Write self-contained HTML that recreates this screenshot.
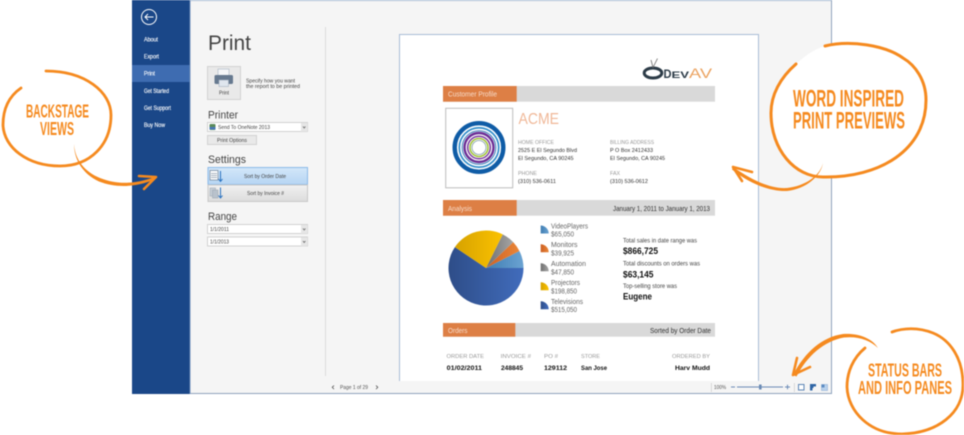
<!DOCTYPE html>
<html><head><meta charset="utf-8"><style>
html,body{margin:0;padding:0;background:#fff;width:964px;height:435px;overflow:hidden}
svg{display:block;filter:blur(.4px)}
text{font-family:"Liberation Sans",sans-serif;white-space:pre}
.n{fill:#fff;font-size:6px;stroke:#fff;stroke-width:.12px}
.s{fill:#444;font-size:5.3px}
.h{fill:#444;font-size:11px}
.l{fill:#999;font-size:5.6px}
.d{fill:#333;font-size:5.8px}
.b{fill:#f7dccb;font-size:7.3px}
.r{fill:#333;font-size:7.2px}
.g{fill:#666;font-size:7px}
.t{fill:#444;font-size:6px}
.v{fill:#111;font-size:9.2px;font-weight:bold}
.o{fill:#111;font-size:6.6px;font-weight:bold}
.c{fill:#f58a1f;font-weight:bold}
.st{fill:#555;font-size:5px}
.pen{fill:none;stroke:#f58a1f;stroke-linecap:round;stroke-linejoin:round}
.fil{fill:#f58a1f}
</style></head><body>
<svg width="964" height="435" viewBox="0 0 964 435" xmlns="http://www.w3.org/2000/svg">
<defs>
<linearGradient id="gV" x1="0" x2="1" y1="0" y2="0"><stop offset="0" stop-color="#3f7db2"/><stop offset="1" stop-color="#6ba3d2"/></linearGradient>
<linearGradient id="gM" x1="0" x2="1" y1="0" y2="0"><stop offset="0" stop-color="#cc5f22"/><stop offset="1" stop-color="#ea8638"/></linearGradient>
<linearGradient id="gA" x1="0" x2="1" y1="0" y2="0"><stop offset="0" stop-color="#6f6f6f"/><stop offset="1" stop-color="#a5a5a5"/></linearGradient>
<linearGradient id="gP" x1="0" x2="1" y1="0" y2="0"><stop offset="0" stop-color="#d6a200"/><stop offset="1" stop-color="#fbc200"/></linearGradient>
<linearGradient id="gT" x1="0" x2="1" y1="0" y2="0"><stop offset="0" stop-color="#2e4d88"/><stop offset="1" stop-color="#416cbc"/></linearGradient>
<linearGradient id="gB" x1="0" x2="0" y1="0" y2="1"><stop offset="0" stop-color="#d3e7f9"/><stop offset="1" stop-color="#b6d5f3"/></linearGradient>
<linearGradient id="gG" x1="0" x2="0" y1="0" y2="1"><stop offset="0" stop-color="#f1f1f1"/><stop offset="1" stop-color="#dcdcdc"/></linearGradient>
</defs>

<!-- window -->
<rect x="132" y="0" width="700" height="394" fill="#f5f5f5"/>
<rect x="132" y="0" width="700" height="1" fill="#a9bdd6"/>
<rect x="132" y="393" width="700" height="1" fill="#8fa3bd"/>
<rect x="831" y="0" width="1" height="394" fill="#8fa3bd"/>
<rect x="132" y="0" width="57.5" height="394" fill="#1a4788"/>
<rect x="189.5" y="0" width="1" height="394" fill="#6f8fbb"/>

<!-- sidebar -->
<circle cx="149" cy="17" r="7.5" fill="none" stroke="#fff" stroke-width="1"/>
<path d="M153.5 17H145M148 14L145 17L148 20" fill="none" stroke="#fff" stroke-width="1"/>
<rect x="132" y="65" width="57.5" height="17" fill="#3e6cb1"/>
<text class="n" x="144" y="41.5" textLength="14" lengthAdjust="spacingAndGlyphs">About</text>
<text class="n" x="144" y="58.5" textLength="15" lengthAdjust="spacingAndGlyphs">Export</text>
<text class="n" x="144" y="75.5" textLength="11" lengthAdjust="spacingAndGlyphs">Print</text>
<text class="n" x="144" y="93" textLength="25" lengthAdjust="spacingAndGlyphs">Get Started</text>
<text class="n" x="144" y="110" textLength="27" lengthAdjust="spacingAndGlyphs">Get Support</text>
<text class="n" x="144" y="127" textLength="21" lengthAdjust="spacingAndGlyphs">Buy Now</text>

<!-- options column -->
<text x="208" y="50" font-size="21.5" fill="#444" textLength="43" lengthAdjust="spacingAndGlyphs">Print</text>
<rect x="207.5" y="66.5" width="33" height="33" fill="#e9e9e9" stroke="#d2d2d2"/>
<rect x="218" y="69" width="11" height="7" fill="#f4f6f8" stroke="#9aa8b8" stroke-width=".5"/>
<rect x="214.5" y="75" width="18.5" height="9" rx="1.5" fill="#66798f"/>
<rect x="219" y="80" width="9.5" height="6.5" fill="#dfe6ee" stroke="#9aa8b8" stroke-width=".5"/>
<text class="s" x="219" y="94.5" textLength="10" lengthAdjust="spacingAndGlyphs">Print</text>
<text class="s" x="246" y="82.5" textLength="49" lengthAdjust="spacingAndGlyphs">Specify how you want</text>
<text class="s" x="246" y="88" textLength="54" lengthAdjust="spacingAndGlyphs">the report to be printed</text>

<text class="h" x="208" y="118.5" textLength="30" lengthAdjust="spacingAndGlyphs">Printer</text>
<rect x="207.5" y="122.5" width="100" height="9" fill="#fff" stroke="#d2d2d2"/>
<rect x="301" y="123" width="6.5" height="8.5" fill="#e6e6e6"/>
<path d="M303 126.5l1.2 1.5 1.2-1.5" fill="none" stroke="#666" stroke-width=".8"/>
<rect x="209.5" y="124" width="6" height="6" rx="1" fill="#5a8a5a"/>
<rect x="209.5" y="127" width="6" height="2.5" fill="#4a78b8"/>
<text class="s" x="218" y="129" textLength="52" lengthAdjust="spacingAndGlyphs">Send To OneNote 2013</text>
<rect x="207.5" y="135.5" width="49" height="9" fill="#e9e9e9" stroke="#d2d2d2"/>
<text class="s" x="217" y="142" textLength="30" lengthAdjust="spacingAndGlyphs">Print Options</text>

<text class="h" x="208" y="163" textLength="38" lengthAdjust="spacingAndGlyphs">Settings</text>
<rect x="208" y="167.5" width="99.5" height="17" fill="url(#gB)" stroke="#8cbae8"/>
<rect x="208" y="185" width="99.5" height="16.5" fill="url(#gG)" stroke="#c8c8c8"/>
<rect x="210" y="170.5" width="8" height="9.5" fill="#fff" stroke="#6d7f94" stroke-width=".7"/>
<path d="M211 173.5h6M211 175.5h6M211 177.5h6" stroke="#8a99aa" stroke-width=".7"/>
<path d="M220.5 171v10M218.5 179l2 2.5 2-2.5" fill="none" stroke="#2a72c0" stroke-width="1"/>
<text class="s" x="244" y="178" textLength="42" lengthAdjust="spacingAndGlyphs">Sort by Order Date</text>
<rect x="210" y="188" width="5.5" height="8" fill="#c7ced6" stroke="#98a4b0" stroke-width=".5"/>
<rect x="212.5" y="190" width="5.5" height="8" fill="#b9c2cc" stroke="#98a4b0" stroke-width=".5"/>
<path d="M220.5 187.5v10M218.5 195.5l2 2.5 2-2.5" fill="none" stroke="#2a72c0" stroke-width="1"/>
<text class="s" x="247" y="195" textLength="37" lengthAdjust="spacingAndGlyphs">Sort by Invoice #</text>

<text class="h" x="208" y="220" textLength="29" lengthAdjust="spacingAndGlyphs">Range</text>
<rect x="207.5" y="224.5" width="100" height="9" fill="#fff" stroke="#d2d2d2"/>
<rect x="301" y="225" width="6.5" height="8.5" fill="#e6e6e6"/>
<path d="M303 228.5l1.2 1.5 1.2-1.5" fill="none" stroke="#666" stroke-width=".8"/>
<text class="s" x="210" y="231" textLength="19" lengthAdjust="spacingAndGlyphs">1/1/2011</text>
<rect x="207.5" y="237" width="100" height="9" fill="#fff" stroke="#d2d2d2"/>
<rect x="301" y="237.5" width="6.5" height="8.5" fill="#e6e6e6"/>
<path d="M303 241l1.2 1.5 1.2-1.5" fill="none" stroke="#666" stroke-width=".8"/>
<text class="s" x="210" y="243.5" textLength="19" lengthAdjust="spacingAndGlyphs">1/1/2013</text>
<rect x="325" y="27" width="1" height="349" fill="#dcdcdc"/>

<!-- page -->
<rect x="399" y="34" width="360" height="347" fill="#fff"/>
<rect x="399" y="34" width="360" height="1" fill="#a9bcd6"/>
<rect x="399" y="34" width="1" height="347" fill="#a9bcd6"/>
<rect x="758" y="34" width="1" height="347" fill="#a9bcd6"/>

<!-- devav logo -->
<ellipse cx="653" cy="73" rx="8.8" ry="5" fill="none" stroke="#2c3b47" stroke-width="3"/>
<path d="M651 60L653 67.5L657.5 58.5" fill="none" stroke="#6a6a6a" stroke-width=".8"/>
<text x="663.5" y="78" font-size="12" font-weight="bold" fill="#2c3b47" textLength="8" lengthAdjust="spacingAndGlyphs">D</text>
<text x="671.5" y="78" font-size="9" font-weight="bold" fill="#2c3b47" textLength="17.5" lengthAdjust="spacingAndGlyphs">EV</text>
<text x="689" y="78" font-size="14" fill="#eba25f" textLength="23" lengthAdjust="spacingAndGlyphs">AV</text>

<!-- customer bar -->
<rect x="443" y="86" width="272" height="15.7" fill="#d9d9d9"/>
<rect x="443" y="86" width="73.7" height="15.7" fill="#dd7f45"/>
<text class="b" x="448" y="96.5" textLength="49" lengthAdjust="spacingAndGlyphs">Customer Profile</text>
<rect x="445.7" y="108.3" width="67" height="79.5" fill="#fff" stroke="#bcbcbc"/>
<g fill="none">
<circle cx="479" cy="147.5" r="24.3" stroke="#0f5ca6" stroke-width="4.4"/>
<circle cx="479" cy="147.5" r="19.7" stroke="#2b8ac9" stroke-width="1.6"/>
<circle cx="479" cy="147.5" r="16.8" stroke="#3a7fb8" stroke-width="1"/>
<circle cx="479" cy="147.5" r="14.5" stroke="#6c2f95" stroke-width="2.4"/>
<circle cx="479" cy="147.5" r="11.3" stroke="#7d3ca3" stroke-width="1.5"/>
<circle cx="479" cy="147.5" r="9" stroke="#a2c53c" stroke-width="1.6"/>
<circle cx="479" cy="147.5" r="7" stroke="#7f9aa8" stroke-width=".8"/>
</g>
<text x="518.5" y="124" font-size="15.5" fill="#f0b898" textLength="40.5" lengthAdjust="spacingAndGlyphs">ACME</text>
<text class="l" x="518" y="144" textLength="36" lengthAdjust="spacingAndGlyphs">HOME OFFICE</text>
<text class="d" x="518" y="152.2" textLength="59" lengthAdjust="spacingAndGlyphs">2525 E El Segundo Blvd</text>
<text class="d" x="518" y="159.8" textLength="55.5" lengthAdjust="spacingAndGlyphs">El Segundo, CA 90245</text>
<text class="l" x="518" y="175" textLength="19" lengthAdjust="spacingAndGlyphs">PHONE</text>
<text class="d" x="518" y="183" textLength="38" lengthAdjust="spacingAndGlyphs">(310) 536-0611</text>
<text class="l" x="610" y="144" textLength="44" lengthAdjust="spacingAndGlyphs">BILLING ADDRESS</text>
<text class="d" x="610" y="152.2" textLength="43" lengthAdjust="spacingAndGlyphs">P O Box 2412433</text>
<text class="d" x="610" y="159.8" textLength="55" lengthAdjust="spacingAndGlyphs">El Segundo, CA 90245</text>
<text class="l" x="610" y="175" textLength="10" lengthAdjust="spacingAndGlyphs">FAX</text>
<text class="d" x="610" y="183" textLength="38" lengthAdjust="spacingAndGlyphs">(310) 536-0612</text>

<!-- analysis bar -->
<rect x="443" y="200" width="272" height="15.7" fill="#d9d9d9"/>
<rect x="443" y="200" width="73.7" height="15.7" fill="#dd7f45"/>
<text class="b" x="448" y="211" textLength="24" lengthAdjust="spacingAndGlyphs">Analysis</text>
<text class="r" x="613" y="211" textLength="97" lengthAdjust="spacingAndGlyphs">January 1, 2011 to January 1, 2013</text>

<!-- pie -->
<path d="M486 268L454.9 247.1A37.5 37.5 0 1 0 523.5 268Z" fill="url(#gT)"/>
<path d="M486 268L523.5 268A37.5 37.5 0 0 0 519.4 251Z" fill="url(#gV)"/>
<path d="M486 268L519.4 251A37.5 37.5 0 0 0 513.2 242.1Z" fill="url(#gM)"/>
<path d="M486 268L513.2 242.1A37.5 37.5 0 0 0 502.7 234.4Z" fill="url(#gA)"/>
<path d="M486 268L502.7 234.4A37.5 37.5 0 0 0 454.9 247.1Z" fill="url(#gP)"/>

<!-- legend -->
<path d="M540.7 233.5V225.5A8 8 0 0 1 548.7 233.5Z" fill="url(#gV)"/>
<path d="M540.7 252.3V244.3A8 8 0 0 1 548.7 252.3Z" fill="url(#gM)"/>
<path d="M540.7 271.3V263.3A8 8 0 0 1 548.7 271.3Z" fill="url(#gA)"/>
<path d="M540.7 290.3V282.3A8 8 0 0 1 548.7 290.3Z" fill="url(#gP)"/>
<path d="M540.7 309.3V301.3A8 8 0 0 1 548.7 309.3Z" fill="url(#gT)"/>
<text class="g" x="551" y="228.5" textLength="37" lengthAdjust="spacingAndGlyphs">VideoPlayers</text>
<text class="g" x="551" y="236.7" textLength="23" lengthAdjust="spacingAndGlyphs">$65,050</text>
<text class="g" x="551" y="247" textLength="26.5" lengthAdjust="spacingAndGlyphs">Monitors</text>
<text class="g" x="551" y="255.5" textLength="23" lengthAdjust="spacingAndGlyphs">$39,925</text>
<text class="g" x="551" y="266" textLength="35" lengthAdjust="spacingAndGlyphs">Automation</text>
<text class="g" x="551" y="274.5" textLength="23" lengthAdjust="spacingAndGlyphs">$47,850</text>
<text class="g" x="551" y="285" textLength="29" lengthAdjust="spacingAndGlyphs">Projectors</text>
<text class="g" x="551" y="293.5" textLength="26" lengthAdjust="spacingAndGlyphs">$198,850</text>
<text class="g" x="551" y="304" textLength="32" lengthAdjust="spacingAndGlyphs">Televisions</text>
<text class="g" x="551" y="312" textLength="26" lengthAdjust="spacingAndGlyphs">$515,050</text>

<!-- stats -->
<text class="t" x="623" y="242.3" textLength="74" lengthAdjust="spacingAndGlyphs">Total sales in date range was</text>
<text class="v" x="623" y="254" textLength="35" lengthAdjust="spacingAndGlyphs">$866,725</text>
<text class="t" x="623" y="265.5" textLength="77" lengthAdjust="spacingAndGlyphs">Total discounts on orders was</text>
<text class="v" x="623" y="277.5" textLength="30.5" lengthAdjust="spacingAndGlyphs">$63,145</text>
<text class="t" x="623" y="288" textLength="54" lengthAdjust="spacingAndGlyphs">Top-selling store was</text>
<text class="v" x="623" y="299.5" textLength="29" lengthAdjust="spacingAndGlyphs">Eugene</text>

<!-- orders -->
<rect x="443" y="323" width="272" height="13.7" fill="#d9d9d9"/>
<rect x="443" y="323" width="72.3" height="13.7" fill="#dd7f45"/>
<text class="b" x="448" y="333" textLength="19.5" lengthAdjust="spacingAndGlyphs">Orders</text>
<text class="r" x="650" y="333" textLength="61" lengthAdjust="spacingAndGlyphs">Sorted by Order Date</text>
<text class="l" x="446.5" y="358" textLength="37.5" lengthAdjust="spacingAndGlyphs">ORDER DATE</text>
<text class="l" x="500.7" y="358" textLength="30.3" lengthAdjust="spacingAndGlyphs">INVOICE #</text>
<text class="l" x="544" y="358" textLength="14" lengthAdjust="spacingAndGlyphs">PO #</text>
<text class="l" x="581" y="358" textLength="19" lengthAdjust="spacingAndGlyphs">STORE</text>
<text class="l" x="672" y="358" textLength="38" lengthAdjust="spacingAndGlyphs">ORDERED BY</text>
<text class="o" x="446.7" y="370" textLength="35.3" lengthAdjust="spacingAndGlyphs">01/02/2011</text>
<text class="o" x="501" y="370" textLength="22" lengthAdjust="spacingAndGlyphs">248845</text>
<text class="o" x="544" y="370" textLength="23" lengthAdjust="spacingAndGlyphs">129112</text>
<text class="o" x="581" y="370" textLength="26" lengthAdjust="spacingAndGlyphs">San Jose</text>
<text class="o" x="675" y="370" textLength="35" lengthAdjust="spacingAndGlyphs">Harv Mudd</text>

<!-- status bar -->
<rect x="190.5" y="381" width="640.5" height="12" fill="#f5f5f5"/>
<path d="M334 385.5l-1.8 1.8 1.8 1.8M376 385.5l1.8 1.8-1.8 1.8" fill="none" stroke="#555" stroke-width=".8"/>
<text class="st" x="340" y="389" textLength="28" lengthAdjust="spacingAndGlyphs">Page 1 of 29</text>
<rect x="711" y="383" width=".7" height="9" fill="#ccc"/>
<text class="st" x="714" y="389" textLength="12" lengthAdjust="spacingAndGlyphs">100%</text>
<path d="M731 387h4M737 387h46M785 387h5M787.5 384.7v4.6" stroke="#6a8ab5" stroke-width="1" fill="none"/>
<rect x="759" y="384.5" width="2.6" height="5" fill="#6a8ab5"/>
<rect x="794" y="383" width=".7" height="9" fill="#ccc"/>
<rect x="798.5" y="384.5" width="5.5" height="5.5" fill="#fff" stroke="#5b84b5"/>
<rect x="810" y="384" width="3.5" height="4" fill="#2f65a5"/><rect x="813.5" y="384" width="2.5" height="2.5" fill="#2f65a5"/><rect x="810" y="388" width="2.5" height="2.5" fill="#2f65a5"/>
<rect x="821.5" y="384.5" width="6" height="6" fill="#b9d2ec" stroke="#8fb0d5" stroke-width=".6"/><rect x="821.5" y="384.5" width="3" height="3" fill="#5b8bc2"/>

<!-- white blobs -->
<path d="M796 64C780 78 771 95 771 113C771 150 795 177 823 177C880 178 926 150 926 100C926 80 915 65 903 58C885 45 850 40 825 46C812 50 804 57 796 64Z" fill="#fff"/>

<!-- callouts -->
<path class="pen" stroke-width="2.8" d="M21 88C8 97 3 110 3 125C4 148 28 166 60 166C90 166 111 145 111 115C111 92 85 71 46 71"/>
<path class="fil" d="M74 144C75 160 85 172 100 178C118 185 135 184 155 177L155 179.5C135 187.5 116 188 99 181.5C83 174 74 160 74 144Z"/>
<path class="pen" stroke-width="2.6" d="M139 176L156 177L144 189"/>
<text class="c" x="26" y="117.3" font-size="18.5" textLength="63" lengthAdjust="spacingAndGlyphs">BACKSTAGE</text>
<text class="c" x="40" y="135" font-size="18.5" textLength="34" lengthAdjust="spacingAndGlyphs">VIEWS</text>

<path class="pen" stroke-width="3" d="M796 64C780 78 771 95 771 113C771 150 795 177 823 177C880 178 926 150 926 100C926 80 915 65 903 58C885 45 850 40 825 46"/>
<path class="fil" d="M823 163C820 176 805 186 787 188C770 189 752 180 733 167L732 169.5C750 184 770 191.5 787 191C806 189 821 176 823 163Z"/>
<path class="pen" stroke-width="2.6" d="M752 172L733 167L742 181"/>
<text class="c" x="793" y="106.7" font-size="24" textLength="111" lengthAdjust="spacingAndGlyphs">WORD INSPIRED</text>
<text class="c" x="793" y="128.3" font-size="24" textLength="112" lengthAdjust="spacingAndGlyphs">PRINT PREVIEWS</text>

<path class="pen" stroke-width="2.8" d="M865 348C853 358 847 372 847 387C848 412 870 434 902 434C938 433 963 413 963 385C963 358 950 340 933 333C918 327 903 328 892 332"/>
<path class="fil" d="M878 348C872 338 858 333 843 334C822 337 805 352 793 375L796.5 376.5C807 356 824 341 844 337.5C858 336 870 340 878 348Z"/>
<path class="pen" stroke-width="2.6" d="M797 358L793 375L810 367"/>
<text class="c" x="868" y="376.7" font-size="18.5" textLength="74" lengthAdjust="spacingAndGlyphs">STATUS BARS</text>
<text class="c" x="858" y="394" font-size="18.5" textLength="94" lengthAdjust="spacingAndGlyphs">AND INFO PANES</text>
</svg>
</body></html>
